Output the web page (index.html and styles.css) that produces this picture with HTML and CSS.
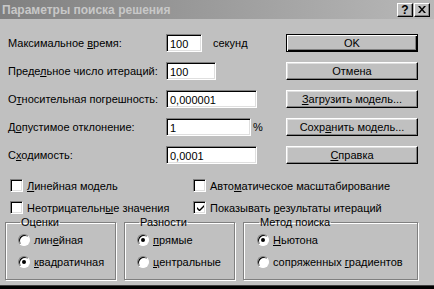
FILE: index.html
```html
<html>
<head>
<title>Параметры поиска решения</title>
<link rel="stylesheet" href="styles.css">
</head>
<body>

<div class="window">
  <div class="titlebar">
    <span class="title">Параметры поиска решения</span>
    <div class="caption-buttons">
      <span class="cbtn">?</span>
      <span class="cbtn close">
        <svg width="8" height="7" viewBox="0 0 8 7"><path d="M0 0h2l2 2.5L6 0h2L5 3.5 8 7H6L4 4.5 2 7H0l3-3.5z" fill="#000"/></svg>
      </span>
    </div>
  </div>

  <div class="top">
    <div class="fields">
      <div class="row">
        <span class="label">Максимальное <u>в</u>ремя:</span>
        <span class="field w36">100</span>
        <span class="unit">секунд</span>
      </div>
      <div class="row">
        <span class="label">Преде<u>л</u>ьное число итераций:</span>
        <span class="field w50">100</span>
      </div>
      <div class="row">
        <span class="label">О<u>т</u>носительная погрешность:</span>
        <span class="field w91">0,000001</span>
      </div>
      <div class="row">
        <span class="label">Д<u>о</u>пустимое отклонение:</span>
        <span class="field w85">1</span>
        <span class="unit pct">%</span>
      </div>
      <div class="row">
        <span class="label">С<u>х</u>одимость:</span>
        <span class="field w91">0,0001</span>
      </div>
    </div>

    <div class="buttons">
      <button class="btn default">OK</button>
      <button class="btn">Отмена</button>
      <button class="btn"><u>З</u>агрузить модель...</button>
      <button class="btn">Сохр<u>а</u>нить модель...</button>
      <button class="btn"><u>С</u>правка</button>
    </div>
  </div>

  <div class="checks">
    <div class="check"><span class="box"></span><span><u>Л</u>инейная модель</span></div>
    <div class="check"><span class="box"></span><span>Авто<u>м</u>атическое масштабирование</span></div>
    <div class="check"><span class="box"></span><span>Неотрицательн<u>ы</u>е значения</span></div>
    <div class="check">
      <span class="box">
        <svg width="9" height="9" viewBox="0 0 9 9"><path d="M1 3v2l2 2h1l4-4V1L3.5 5.5z" fill="#000"/></svg>
      </span>
      <span>Показывать <u>р</u>езультаты итераций</span>
    </div>
  </div>

  <div class="groups">
    <fieldset class="group g1">
      <legend>Оценки</legend>
      <div class="option"><span class="radio"></span><span>лин<u>е</u>йная</span></div>
      <div class="option"><span class="radio on"></span><span><u>к</u>вадратичная</span></div>
    </fieldset>
    <fieldset class="group g2">
      <legend>Разности</legend>
      <div class="option"><span class="radio on"></span><span><u>п</u>рямые</span></div>
      <div class="option"><span class="radio"></span><span><u>ц</u>ентральные</span></div>
    </fieldset>
    <fieldset class="group g3">
      <legend>Метод поиска</legend>
      <div class="option"><span class="radio on"></span><span><u>Н</u>ьютона</span></div>
      <div class="option"><span class="radio"></span><span>сопряженных <u>г</u>радиентов</span></div>
    </fieldset>
  </div>

  <div class="bottom-edge"></div>
</div>

</body>
</html>
```

FILE: styles.css
```css
* {
  box-sizing: border-box;
}

body {
  margin: 0;
  padding: 0;
  background-color: #c0c0c0;
  font-family: 'Liberation Sans', Arial, sans-serif;
  font-size: 11px;
  color: #000;
}

u {
  text-underline-offset: 1px;
}

.window {
  width: 434px;
  height: 289px;
  display: flex;
  flex-direction: column;
}

.titlebar {
  height: 19px;
  background: linear-gradient(to right, #808080, #b8b8b8);
  display: flex;
  align-items: center;
  justify-content: space-between;
  padding: 0 4px 0 2px;
}

.title {
  color: #c8c8c8;
  font-weight: bold;
  font-size: 12px;
}

.caption-buttons {
  display: flex;
  gap: 1px;
}

.cbtn {
  width: 16px;
  height: 14px;
  background-color: #c0c0c0;
  border: 1px solid;
  border-color: #fff #000 #000 #fff;
  box-shadow: inset -1px -1px #808080;
  display: flex;
  align-items: center;
  justify-content: center;
  font-weight: bold;
  font-size: 12px;
  line-height: 1;
}

.top {
  display: flex;
  margin-top: 15px;
  padding-left: 8px;
}

.fields {
  width: 278px;
  display: flex;
  flex-direction: column;
  gap: 10px;
}

.row {
  height: 18px;
  display: flex;
  align-items: center;
}

.label {
  width: 158px;
}

.field {
  height: 18px;
  background-color: #fff;
  border: 1px solid;
  border-color: #808080 #fff #fff #808080;
  box-shadow: inset 1px 1px #000, inset -1px -1px #dfdfdf;
  padding: 1px 2px 0 3px;
  display: flex;
  align-items: center;
}

.w36 { width: 36px; }
.w50 { width: 50px; }
.w85 { width: 85px; }
.w91 { width: 91px; }

.unit {
  margin-left: 11px;
}

.unit.pct {
  margin-left: 2px;
}

.buttons {
  width: 132px;
  display: flex;
  flex-direction: column;
  gap: 10px;
}

.btn {
  height: 18px;
  background-color: #c0c0c0;
  font-family: inherit;
  font-size: 11px;
  color: #000;
  border: 1px solid;
  border-color: #fff #000 #000 #fff;
  box-shadow: inset -1px -1px #808080, inset 1px 1px #dfdfdf;
  padding: 0;
}

.btn.default {
  border: 1px solid #000;
  box-shadow: inset 1px 1px #fff, inset -1px -1px #000, inset -2px -2px #808080;
}

.checks {
  display: grid;
  grid-template-columns: 183px 1fr;
  row-gap: 9px;
  margin-top: 15px;
  padding-left: 10px;
}

.check {
  height: 13px;
  display: flex;
  align-items: center;
  gap: 4px;
}

.box {
  width: 13px;
  height: 13px;
  background-color: #fff;
  border: 1px solid;
  border-color: #808080 #fff #fff #808080;
  box-shadow: inset 1px 1px #000, inset -1px -1px #dfdfdf;
  display: flex;
  align-items: center;
  justify-content: center;
  padding: 1px 0 0 1px;
}

.groups {
  display: flex;
  margin-top: 2px;
  padding-left: 5px;
}

.group {
  margin: 0;
  height: 64px;
  padding: 5px 0 0 12px;
  border: 1px solid #808080;
  box-shadow: inset 1px 1px #fff, 1px 1px #fff;
  display: flex;
  flex-direction: column;
  gap: 10px;
}

.group legend {
  padding: 0 1px;
  margin-left: 2px;
  line-height: 13px;
}

.g1 { width: 111px; margin-right: 8px; }
.g2 { width: 111px; margin-right: 8px; }
.g3 { width: 175px; padding-left: 13px; }

.option {
  height: 12px;
  display: flex;
  align-items: center;
  gap: 4px;
}

.radio {
  width: 12px;
  height: 12px;
  border-radius: 50%;
  background-color: #fff;
  border: 1px solid;
  border-color: #808080 #fff #fff #808080;
  box-shadow: inset 1px 1px #000;
  display: flex;
  align-items: center;
  justify-content: center;
}

.radio.on::after {
  content: '';
  width: 4px;
  height: 4px;
  border-radius: 50%;
  background-color: #000;
}

.bottom-edge {
  margin-top: auto;
  height: 4px;
  background-color: #000;
  border-top: 1px solid #404040;
}
```
